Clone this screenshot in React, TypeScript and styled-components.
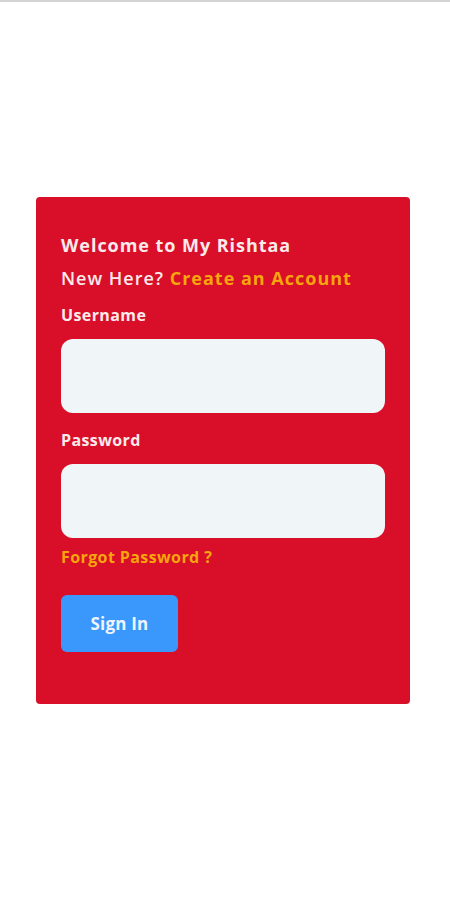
import React from "react";
import styled, { createGlobalStyle } from "styled-components";

const Global = createGlobalStyle`
  html, body { margin: 0; padding: 0; background: #ffffff; }
  body { font-family: "Open Sans", "DejaVu Sans", sans-serif; }
  * { box-sizing: border-box; }
`;

const Page = styled.div`
  width: 450px;
  min-height: 900px;
  background: #ffffff;
  border-top: 2px solid #d4d4d4;
  display: flex;
  flex-direction: column;
  align-items: flex-start;
  padding: 195px 0 0 36px;
`;

const Card = styled.form`
  width: 374px;
  background: #d90e28;
  border-radius: 4px;
  padding: 36px 25px 52px 25px;
  display: flex;
  flex-direction: column;
`;

const Title = styled.h1`
  margin: 0;
  font-size: 18px;
  line-height: 24px;
  font-weight: 700;
  color: #fbeaea;
  letter-spacing: 0.95px;
`;

const SubLine = styled.p`
  margin: 9px 0 0;
  font-size: 18px;
  line-height: 24px;
  font-weight: 600;
  color: #fbeaea;
  letter-spacing: 1px;
`;

const Link = styled.a`
  color: #f7a50c;
  font-weight: 700;
  text-decoration: none;
`;

const Label = styled.label<{ $top: number }>`
  margin-top: ${(p) => p.$top}px;
  font-size: 16px;
  line-height: 20px;
  font-weight: 700;
  color: #fbeaea;
  letter-spacing: 0.4px;
`;

const Input = styled.input`
  margin-top: 14px;
  width: 324px;
  height: 74px;
  border: none;
  border-radius: 12px;
  background: #f0f5f8;
  outline: none;
  padding: 0 16px;
  font-size: 16px;
`;

const Forgot = styled.a`
  margin-top: 9px;
  font-size: 16px;
  line-height: 20px;
  font-weight: 700;
  color: #f7a50c;
  text-decoration: none;
  letter-spacing: 0.4px;
`;

const Button = styled.button`
  margin-top: 28px;
  width: 117px;
  height: 57px;
  border: none;
  border-radius: 6px;
  background: #3a98fd;
  color: #eef4fb;
  font-family: inherit;
  font-size: 17px;
  font-weight: 700;
  letter-spacing: 0.2px;
`;

export default function App() {
  return (
    <>
      <Global />
      <Page>
        <Card onSubmit={(e) => e.preventDefault()}>
          <Title>Welcome to My Rishtaa</Title>
          <SubLine>
            New Here? <Link href="#">Create an Account</Link>
          </SubLine>
          <Label $top={15}>Username</Label>
          <Input type="text" />
          <Label $top={17}>Password</Label>
          <Input type="password" />
          <Forgot href="#">Forgot Password ?</Forgot>
          <Button type="submit">Sign In</Button>
        </Card>
      </Page>
    </>
  );
}
